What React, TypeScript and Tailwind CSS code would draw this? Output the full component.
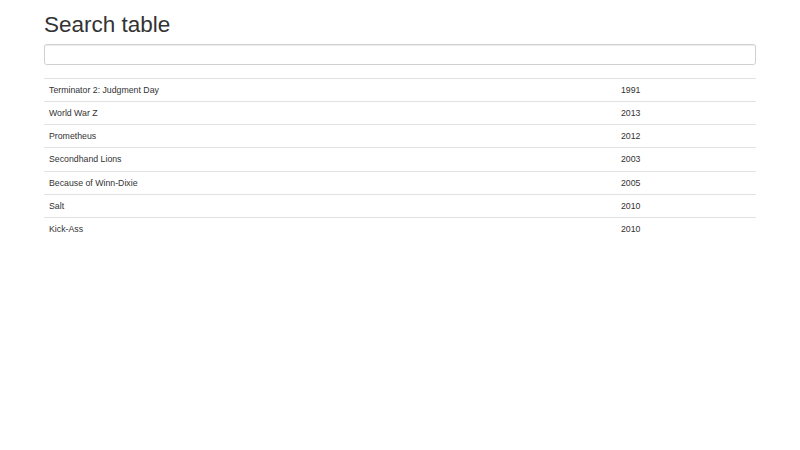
import React, { useState } from 'react';

const movies = [
  { title: 'Terminator 2: Judgment Day', year: 1991 },
  { title: 'World War Z', year: 2013 },
  { title: 'Prometheus', year: 2012 },
  { title: 'Secondhand Lions', year: 2003 },
  { title: 'Because of Winn-Dixie', year: 2005 },
  { title: 'Salt', year: 2010 },
  { title: 'Kick-Ass', year: 2010 },
];

const App: React.FC = () => {
  const [query, setQuery] = useState('');

  const rows = movies.filter(m => m.title.toLowerCase().includes(query.toLowerCase()));

  return (
    <div className="min-h-screen w-full bg-white text-[#333]" style={{ fontFamily: '"Liberation Sans", Arial, sans-serif' }}>
      <div className="mx-auto w-[712px]">
        <h1 className="mt-[12.5px] mb-[6.25px] text-[22.5px] leading-[24.75px] font-normal">Search table</h1>
        <input
          value={query}
          onChange={e => setQuery(e.target.value)}
          className="block h-[21.25px] w-full rounded-[2.5px] border border-[#d0d0d0] bg-white px-[7.5px] text-[8.75px] shadow-[inset_0_1px_1px_rgba(0,0,0,0.075)] outline-none"
        />
        <table className="mt-[13.25px] w-full border-collapse text-[8.75px]">
          <tbody>
            {rows.map(m => (
              <tr key={m.title}>
                <td className="w-[572px] border-t border-[#e2e2e2] px-[5px] py-[5px] leading-[12.125px]">{m.title}</td>
                <td className="border-t border-[#e2e2e2] px-[5px] py-[5px] leading-[12.125px]">{m.year}</td>
              </tr>
            ))}
          </tbody>
        </table>
      </div>
    </div>
  );
};

export default App;
